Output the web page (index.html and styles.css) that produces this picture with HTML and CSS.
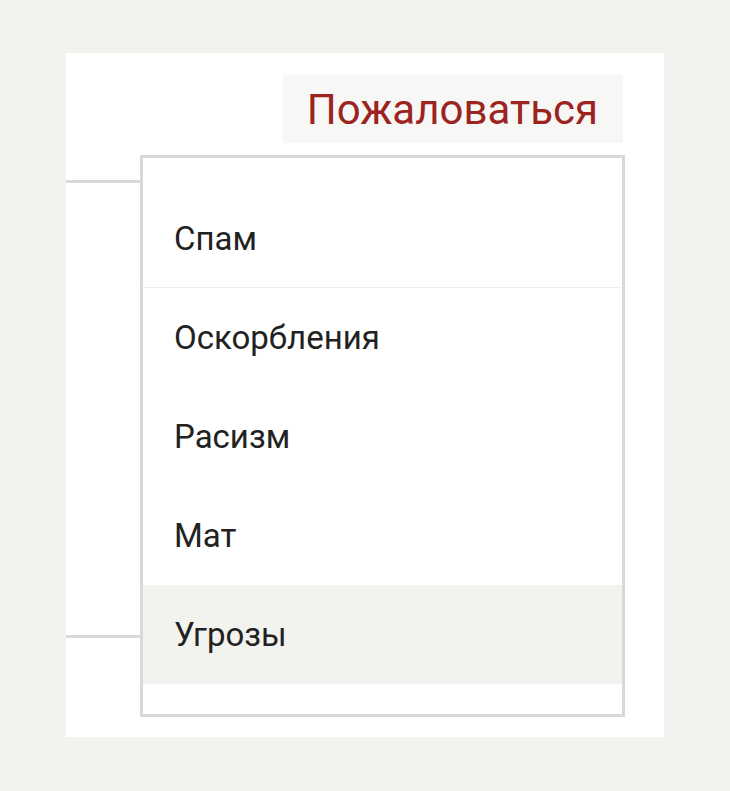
FILE: index.html
```html
<!DOCTYPE html>
<html lang="ru">
<head>
    <meta charset="UTF-8">
    <meta name="viewport" content="width=device-width, initial-scale=1.0">
    <title>Пожаловаться</title>
    <link rel="stylesheet" href="styles.css">
</head>
<body>

<div class="card">
    <div class="toolbar">
        <button class="report-btn" type="button">Пожаловаться</button>
    </div>

    <!-- Лента комментариев под меню -->
    <div class="thread">
        <div class="thread-item"></div>
        <div class="thread-item"></div>
    </div>

    <!-- Выпадающее меню жалобы -->
    <ul class="menu">
        <li class="menu-item first">Спам</li>
        <li class="menu-item">Оскорбления</li>
        <li class="menu-item">Расизм</li>
        <li class="menu-item">Мат</li>
        <li class="menu-item active">Угрозы</li>
    </ul>
</div>

</body>
</html>
```

FILE: styles.css
```css
body {
    font-family: Roboto, "Noto Sans", Arial, sans-serif;
    background-color: #f2f2ef;
    margin: 0;
    padding: 53px 66px 0 66px;
}
.card {
    position: relative;
    background-color: #fff;
    width: 598px;
    height: 684px;
    box-sizing: border-box;
    padding: 22px 41px 0 0;
}
.toolbar {
    display: flex;
    justify-content: flex-end;
}
.report-btn {
    font-family: inherit;
    font-size: 42px;
    color: #9b2421;
    background-color: #f7f7f5;
    border: none;
    height: 68px;
    padding: 0 25px 0 24px;
    cursor: pointer;
}
.thread {
    margin-top: 37px;
}
.thread-item {
    border-top: 3px solid #d9d9d9;
    height: 452px;
    width: 80px;
}
.thread-item:last-child {
    height: 60px;
}
.menu {
    position: absolute;
    top: 102px;
    left: 74px;
    width: 485px;
    margin: 0;
    padding: 31px 0 30px 0;
    list-style: none;
    background-color: #fff;
    border: 3px solid #d9d9d9;
    box-sizing: border-box;
}
.menu-item {
    height: 99px;
    display: flex;
    align-items: center;
    padding-left: 31px;
    font-size: 33px;
    color: #222;
    cursor: pointer;
}
.menu-item.first {
    border-bottom: 1px solid #eeeeec;
    height: 98px;
}
.menu-item.active {
    background-color: #f2f2ef;
}
```
